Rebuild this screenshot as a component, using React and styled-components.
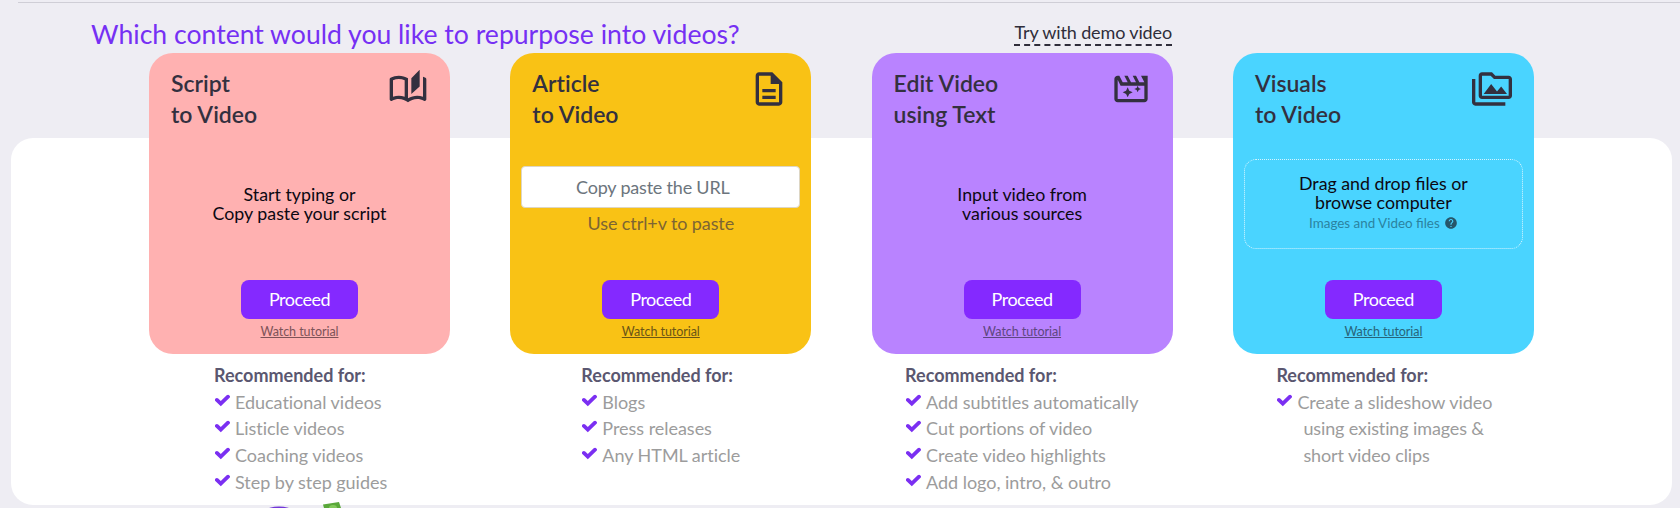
import React from "react";
import styled, { createGlobalStyle } from "styled-components";
import {
  MdOutlineAutoStories,
  MdOutlineDescription,
  MdOutlineMovieFilter,
  MdOutlinePermMedia,
  MdHelp,
} from "react-icons/md";

const GlobalStyle = createGlobalStyle`
  * { box-sizing: border-box; }
  body { margin: 0; background: #eeedf3; font-family: Lato, "Liberation Sans", sans-serif; }
`;

const Page = styled.div`
  height: 508px;
  overflow: hidden;
  display: flex;
  flex-direction: column;
`;

const Divider = styled.hr`
  flex: none;
  width: calc(100% - 18px);
  height: 1px;
  margin: 2px 0 0 18px;
  border: 0;
  background: #cfced6;
`;

const Header = styled.header`
  flex: none;
  height: 135px;
  display: flex;
  justify-content: space-between;
  align-items: flex-start;
  padding: 14px 508px 0 91px;
`;

const Heading = styled.h1`
  margin: 0;
  font-size: 26.6px;
  line-height: 34px;
  font-weight: 400;
  white-space: nowrap;
  color: #7630f3;
`;

const DemoLink = styled.a`
  margin-top: 5px;
  height: 24px;
  font-size: 18px;
  line-height: 21px;
  letter-spacing: -0.13px;
  white-space: nowrap;
  color: #2f2d3a;
  border-bottom: 2px dashed #2f2d3a;
`;

const Panel = styled.main`
  flex: none;
  height: 367px;
  margin: 0 8px 0 11px;
  padding-left: 138px;
  border-radius: 22px;
  background: #fff;
`;

const Columns = styled.div`
  display: grid;
  grid-template-columns: repeat(4, 301px);
  column-gap: 60.3px;
  margin-top: -85.5px;
`;

const Column = styled.section`
  display: flex;
  flex-direction: column;
`;

const Card = styled.article`
  height: 301px;
  border-radius: 24px;
  background: ${(p) => p.$color};
  display: flex;
  flex-direction: column;
  align-items: center;
`;

const CardTop = styled.div`
  align-self: stretch;
  height: 84px;
  display: flex;
  justify-content: space-between;
  padding: 15.5px 22px 0;
  color: #33303f;
  svg { margin-top: 1px; }
`;

const Title = styled.h2`
  margin: 0;
  font-size: 23px;
  line-height: 31px;
  font-weight: 600;
  letter-spacing: 0.01px;
  white-space: pre-line;
`;

const CardBody = styled.div`
  align-self: stretch;
  height: 143.5px;
  padding: ${(p) => p.$top}px 11px 0;
  display: flex;
  flex-direction: column;
  align-items: center;
`;

const Prompt = styled.p`
  margin: 0;
  font-size: 17.8px;
  line-height: 19px;
  text-align: center;
  white-space: pre-line;
  color: #0c0812;
`;

const UrlField = styled.input`
  width: 279px;
  height: 42px;
  padding: 0 16px 0 0;
  border: 1px solid #ddd6c4;
  border-radius: 4px;
  background: #fff;
  font: 400 18px/24px Lato, "Liberation Sans", sans-serif;
  letter-spacing: -0.2px;
  text-align: center;
  &::placeholder { color: #6c757d; opacity: 1; }
`;

const Hint = styled.p`
  margin: 4px 0 0;
  font-size: 18px;
  line-height: 22px;
  letter-spacing: -0.1px;
  color: #7d6533;
`;

const DropZone = styled.div`
  width: 279px;
  height: 90px;
  padding-top: 14px;
  border: 1px dotted #d5f5ff;
  border-radius: 12px;
`;

const FileTypes = styled.div`
  display: flex;
  justify-content: center;
  align-items: center;
  gap: 4px;
  margin-top: 1.5px;
  font-size: 13.4px;
  line-height: 18px;
  color: #2b839f;
  svg { color: #26566a; }
`;

const Proceed = styled.button`
  width: 117px;
  height: 39px;
  padding: 0 0 1px;
  border: 0;
  border-radius: 8px;
  background: #8429ff;
  color: #fff;
  font: 400 18px/22px Lato, "Liberation Sans", sans-serif;
  letter-spacing: -0.5px;
`;

const Tutorial = styled.a`
  margin-top: 5px;
  font-size: 12.5px;
  line-height: 15px;
  letter-spacing: -0.05px;
  color: ${(p) => p.$color};
  text-decoration: underline;
`;

const Recommended = styled.div`
  padding: 8px 0 0 ${(p) => p.$indent}px;
`;

const RecommendedTitle = styled.h3`
  margin: 0;
  font-size: 18px;
  line-height: 27px;
  font-weight: 700;
  color: #5a5770;
`;

const List = styled.ul`
  margin: 0;
  padding: 0;
  list-style: none;
`;

const Item = styled.li`
  display: flex;
  font-size: 18px;
  line-height: 26.8px;
  letter-spacing: -0.03px;
  color: #9c9c9c;
  svg { flex: none; margin: 5px 5px 0 1px; }
`;

const Continuation = styled.li`
  padding-left: 27px;
  font-size: 18px;
  line-height: 26.8px;
  letter-spacing: -0.12px;
  color: #9c9c9c;
`;

const Mascot = styled.svg`
  position: absolute;
  left: 260px;
  top: 500px;
`;

const Check = () => (
  <svg width="15" height="13" viewBox="0 0 15 13" fill="none">
    <path d="M1.9 5.9L5.8 9.6L13 2.7" stroke="#7b2ff2" strokeWidth="3.8" strokeLinecap="round" />
  </svg>
);

const cards = [
  {
    title: "Script\nto Video", color: "#ffb1b1", Icon: MdOutlineAutoStories, top: 48,
    body: <Prompt>{"Start typing or\nCopy paste your script"}</Prompt>,
    link: "#7d5358", indent: 65,
    items: ["Educational videos", "Listicle videos", "Coaching videos", "Step by step guides"],
  },
  {
    title: "Article\nto Video", color: "#f9c215", Icon: MdOutlineDescription, top: 29.5,
    body: (
      <>
        <UrlField placeholder="Copy paste the URL" />
        <Hint>Use ctrl+v to paste</Hint>
      </>
    ),
    link: "#6b5515", indent: 71,
    items: ["Blogs", "Press releases", "Any HTML article"],
  },
  {
    title: "Edit Video\nusing Text", color: "#b983ff", Icon: MdOutlineMovieFilter, top: 48,
    body: <Prompt>{"Input video from\nvarious sources"}</Prompt>,
    link: "#5e4681", indent: 33.5,
    items: ["Add subtitles automatically", "Cut portions of video", "Create video highlights", "Add logo, intro, & outro"],
  },
  {
    title: "Visuals\nto Video", color: "#4ad4ff", Icon: MdOutlinePermMedia, top: 22.5,
    body: (
      <DropZone>
        <Prompt>{"Drag and drop files or\nbrowse computer"}</Prompt>
        <FileTypes>Images and Video files <MdHelp size={14} /></FileTypes>
      </DropZone>
    ),
    link: "#27647a", indent: 43.5,
    items: ["Create a slideshow video"],
    more: ["using existing images &", "short video clips"],
  },
];

export default function App() {
  return (
    <Page>
      <GlobalStyle />
      <Divider />
      <Header>
        <Heading>Which content would you like to repurpose into videos?</Heading>
        <DemoLink>Try with demo video</DemoLink>
      </Header>
      <Panel>
        <Columns>
          {cards.map(({ title, color, Icon, top, body, link, indent, items, more = [] }) => (
            <Column key={title}>
              <Card $color={color}>
                <CardTop>
                  <Title>{title}</Title>
                  <Icon size={40} />
                </CardTop>
                <CardBody $top={top}>{body}</CardBody>
                <Proceed>Proceed</Proceed>
                <Tutorial $color={link}>Watch tutorial</Tutorial>
              </Card>
              <Recommended $indent={indent}>
                <RecommendedTitle>Recommended for:</RecommendedTitle>
                <List>
                  {items.map((text) => (
                    <Item key={text}><Check />{text}</Item>
                  ))}
                  {more.map((text) => (
                    <Continuation key={text}>{text}</Continuation>
                  ))}
                </List>
              </Recommended>
            </Column>
          ))}
        </Columns>
      </Panel>
      <Mascot width="90" height="8" viewBox="0 0 90 8">
        <ellipse cx="19" cy="22" rx="24" ry="15.5" fill="#7338d8" />
        <path d="M63 4.5L79 2L81 8H64Z" fill="#5aa83a" />
        <ellipse cx="73" cy="8" rx="4" ry="3" fill="#83c95b" />
      </Mascot>
    </Page>
  );
}
